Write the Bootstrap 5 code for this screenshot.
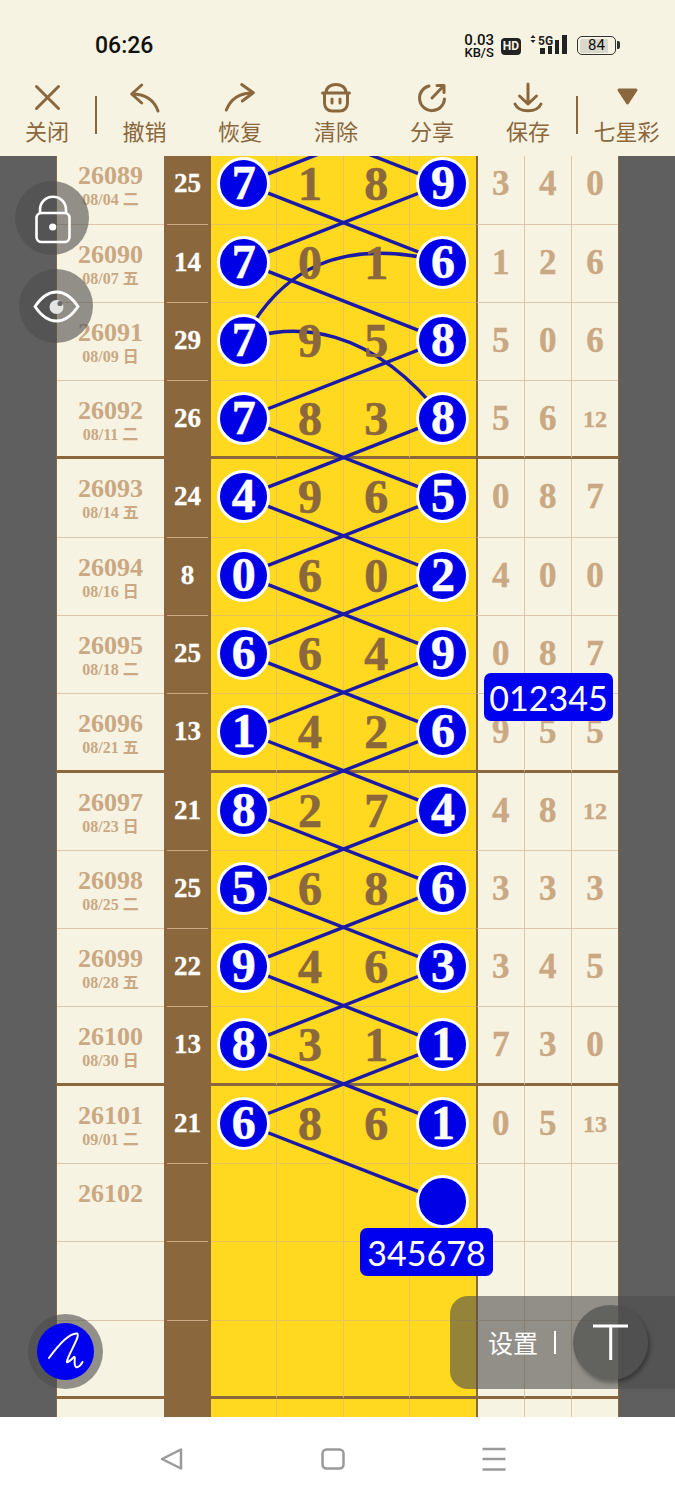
<!DOCTYPE html>
<html lang="zh-CN">
<head>
    <meta charset="UTF-8">
    <meta name="viewport" content="width=device-width, initial-scale=1.0">
    <title>七星彩</title>
    <link href="https://cdn.jsdelivr.net/npm/bootstrap@5.3.0/dist/css/bootstrap.min.css" rel="stylesheet">
    <style>
        body {
            width: 675px;
            height: 1500px;
            overflow: hidden;
            background-color: #fff;
            font-family: "Liberation Serif", "Noto Sans CJK SC", serif;
        }
        .status-bar {
            height: 76px;
            padding: 0 59px 0 95px;
            background-color: #f7f3e2;
            color: #111;
            font-family: Roboto, sans-serif;
        }
        .clock { font-size: 23px; font-weight: 500; margin-top: 31px; line-height: 30px; }
        .net-speed { font-size: 15px; line-height: 13px; font-weight: 500; text-align: center; margin-top: 34px; }
        .net-speed span { display: block; font-size: 13px; line-height: 11px; }
        .hd-badge {
            width: 20px;
            height: 17px;
            margin: 38px 0 0 7px;
            border-radius: 4px;
            background-color: #222;
            color: #f7f3e2;
            font-size: 12px;
            line-height: 17px;
            font-weight: 700;
            text-align: center;
        }
        .signal { margin: 33px 0 0 6px; }
        .signal text { font-family: Roboto, sans-serif; font-size: 12px; font-weight: 700; fill: #222; }
        .battery {
            width: 39px;
            height: 19px;
            margin: 36px 0 0 9px;
            border: 1.5px solid #333;
            border-radius: 5px;
            background: linear-gradient(90deg, #d8d8cc 0 80%, transparent 80%);
            background-clip: content-box;
            padding: 1.5px;
            font-size: 15px;
            line-height: 13px;
            text-align: center;
            position: relative;
        }
        .battery::after {
            content: "";
            position: absolute;
            right: -5px;
            top: 4px;
            width: 3px;
            height: 8px;
            border-radius: 0 2px 2px 0;
            background-color: #333;
        }
        .tool-bar {
            height: 80px;
            background-color: #f7f3e2;
            color: #8a673c;
            font-family: "Noto Sans CJK SC", sans-serif;
        }
        .tool-item { width: 96px; text-align: center; font-size: 22px; line-height: 32px; }
        .tool-item svg { display: block; margin: 6px auto 0; height: 32px; width: 40px; }
        .tool-item.first-item { width: 94px; }
        .tool-item.undo-item { width: 95px; }
        .tool-item.last-item { width: 97px; }
        .tool-sep { width: 2px; height: 38px; margin: 20px 0 0 0; background-color: #8a673c; }
        .tool-sep.first-sep { margin-left: 1px; }
        .tool-bar svg { fill: none; stroke: #8a673c; stroke-width: 3; stroke-linecap: round; stroke-linejoin: round; }

        .board { height: 1261px; background-color: #5f5f5f; overflow: hidden; position: relative; }
        .sheet {
            position: relative;
            width: 563px;
            margin: -9.8px 0 0 56px;
            border-left: 1px solid #8a673c;
            border-right: 1px solid #8a673c;
        }
        .draw-row { display: flex; height: 78.3px; }
        .cell { border-bottom: 1px solid #dcc7aa; background-color: #f7f3e2; color: #c9a883; font-weight: 700; }
        .is-end .cell { border-bottom: 3px solid #8a673c; }
        .date-cell { width: 107px; padding-top: 17px; text-align: center; }
        .issue-no { font-size: 26px; line-height: 26px; }
        .issue-date { font-size: 16px; line-height: 20px; padding-top: 1px; }
        .sum-cell {
            width: 47px;
            position: relative;
            background-color: #8a673c;
            color: #fff;
            font-size: 27px;
            line-height: 75px;
            text-align: center;
            border-bottom-width: 0 !important;
            -webkit-text-stroke: .3px #fff;
        }
        .sum-cell::after {
            content: "";
            position: absolute;
            left: 3px;
            right: 3px;
            bottom: 0;
            height: 1px;
            background-color: #c9a883;
        }
        .is-end .sum-cell::after { display: none; }
        .ball-cell, .num-cell {
            width: 66.25px;
            background-color: #ffd820;
            border-right: 1px solid #e8c25c;
            border-bottom-color: #e8c25c;
            color: #8a673c;
            font-size: 48px;
            line-height: 75px;
            text-align: center;
        }
        .ball-cell.col-last, .num-cell.col-last { border-right: 0; }
        .num-val { position: relative; z-index: 2; -webkit-text-stroke: .6px #8a673c; }
        .ball-wrap { padding-top: 11px; display: flex; justify-content: center; }
        .ball {
            position: relative;
            z-index: 2;
            width: 53px;
            height: 53px;
            border: 3px solid #fff;
            border-radius: 50%;
            background-color: #0000e6;
            color: #fff;
            font-size: 48px;
            line-height: 46px;
            -webkit-text-stroke: .5px #fff;
        }
        .miss-cell {
            width: 47.5px;
            border-right: 1px solid #dcc7aa;
            font-size: 35px;
            line-height: 76px;
            text-align: center;
            -webkit-text-stroke: .4px #c9a883;
        }
        .miss-cell.col-first { border-left: 2px solid #8a673c; width: 48.5px; }
        .miss-cell.col-end { border-right: 0; width: 46px; }
        .miss-cell.is-small { font-size: 24px; }
        .lines {
            position: absolute;
            left: 154px;
            top: 0;
            z-index: 1;
            width: 265px;
            height: 1340px;
            overflow: visible;
            pointer-events: none;
        }
        .lines line, .lines path { stroke: #1a1aa6; stroke-width: 3.4; fill: none; }

        .float-btn {
            position: absolute;
            z-index: 5;
            width: 74px;
            height: 74px;
            border-radius: 50%;
            background-color: rgba(76, 76, 76, .6);
        }
        .lock-btn { left: 15px; top: 25px; }
        .eye-btn { left: 19px; top: 113px; }
        .pen-btn { left: 28px; top: 1158px; width: 75px; height: 75px; padding: 9px; }
        .pen-dot { width: 57px; height: 57px; border-radius: 50%; background-color: #0000f0; }
        .code-tag {
            position: absolute;
            z-index: 6;
            height: 48px;
            border-radius: 7px;
            background-color: #0000f0;
            color: #fff;
            font-family: Lato, sans-serif;
            font-size: 34px;
            line-height: 50px;
            text-align: center;
        }
        .tag-top { left: 484px; top: 517px; width: 129px; }
        .tag-bottom { left: 360px; top: 1072px; width: 133px; }
        .set-panel {
            position: absolute;
            z-index: 5;
            left: 450px;
            top: 1140px;
            width: 225px;
            height: 93px;
            padding-left: 38px;
            border-radius: 18px 0 0 18px;
            background-color: rgba(76, 76, 76, .6);
            color: #fff;
            font-family: "Noto Sans CJK SC", sans-serif;
            font-size: 25px;
        }
        .set-sep { width: 2px; height: 23px; margin: 0 17px 0 16px; background-color: #fff; }
        .top-btn {
            width: 75px;
            height: 75px;
            margin-top: -1px;
            border-radius: 50%;
            background-color: rgba(78, 78, 78, .7);
            box-shadow: 2px 3px 4px rgba(0, 0, 0, .35);
        }
        .nav-row { height: 83px; padding: 29px 10px 0 0; background-color: #fff; }
        .nav-item-box { width: 161px; text-align: center; }
        .nav-item-box svg { fill: none; stroke: #9a9a9a; stroke-width: 2.5; stroke-linejoin: round; }
    </style>
</head>
<body>
<div class="status-bar d-flex align-items-start">
    <div class="clock">06:26</div>
    <div class="net-speed ms-auto">0.03<span>KB/S</span></div>
    <div class="hd-badge">HD</div>
    <svg class="signal" width="41" height="24" viewBox="0 0 41 24">
        <path d="M3.5 5 L6 2 L8.5 5Z M3.5 7 L6 10 L8.5 7Z" fill="#222"/>
        <text x="11" y="12">5G</text>
        <rect x="13" y="15" width="5" height="6" fill="#222"/>
        <rect x="21" y="13" width="4" height="8" fill="#222"/>
        <rect x="28" y="7" width="4" height="14" fill="#222"/>
        <rect x="35" y="2" width="5" height="19" fill="#222"/>
    </svg>
    <div class="battery">84</div>
</div>
<div class="tool-bar d-flex align-items-start">
    <div class="tool-item first-item">
        <svg viewBox="0 0 40 32"><path d="M9.5 4.5 L31.5 26.5 M31.5 4.5 L9.5 26.5"/></svg>关闭
    </div>
    <div class="tool-sep first-sep"></div>
    <div class="tool-item undo-item">
        <svg viewBox="0 0 40 32"><path d="M16.7 3 L6.7 12 L16.7 21 M6.7 12 C20 12 29 18 33 29"/></svg>撤销
    </div>
    <div class="tool-item">
        <svg viewBox="0 0 40 32"><path d="M21.7 2.5 L33.3 10.7 L22.3 19 M33 10.7 C20 11 11 16 6.3 28"/></svg>恢复
    </div>
    <div class="tool-item">
        <svg viewBox="0 0 40 32"><path d="M6.5 11 H33.5 M10 11 C10 -0.5 30 -0.5 30 11 M8.5 11 V21 C8.5 26 12 29 16 29 H24 C28 29 31.5 26 31.5 21 V11 M16 17 V21 M24 17 V21"/></svg>清除
    </div>
    <div class="tool-item">
        <svg viewBox="0 0 40 32"><path d="M17 4 A12.5 12.5 0 1 0 32.5 17 M20 16 L32 3.5 M25 3.5 H32 V10.5"/></svg>分享
    </div>
    <div class="tool-item">
        <svg viewBox="0 0 40 32"><path d="M20 2 V22 M11.5 14 L20 22 L28.5 14 M7 22 C11 31 29 31 33 22"/></svg>保存
    </div>
    <div class="tool-sep"></div>
    <div class="tool-item last-item">
        <svg viewBox="0 0 40 32"><path d="M12 8 H29 L20.5 21Z" fill="#8a673c"/></svg>七星彩
    </div>
</div>

<div class="board">
    <div class="sheet" id="sheet"></div>

    <div class="float-btn lock-btn">
        <svg width="74" height="74" viewBox="0 0 74 74" fill="none" stroke="#fff" stroke-width="2.6">
            <rect x="21.5" y="32" width="33" height="29" rx="5"/>
            <path d="M25 32 V28.7 A13 13 0 0 1 51 28.7 V32"/>
            <circle cx="37.7" cy="46" r="3.6" fill="#fff" stroke="none"/>
        </svg>
    </div>
    <div class="float-btn eye-btn">
        <svg width="74" height="74" viewBox="0 0 74 74" fill="none" stroke="#fff" stroke-width="2.8">
            <path d="M16 37.5 C23 27 30 23 37.5 23 C45 23 52 27 59 37.5 C52 48 45 52 37.5 52 C30 52 23 48 16 37.5Z"/>
            <circle cx="37.5" cy="38" r="7" fill="#e4e4e4" stroke="none"/>
            <circle cx="41" cy="34.5" r="2.6" fill="#6c6c6c" stroke="none"/>
        </svg>
    </div>
    <div class="float-btn pen-btn">
        <div class="pen-dot">
            <svg width="57" height="57" viewBox="0 0 57 57" fill="none" stroke="#fff" stroke-width="2" stroke-linecap="round" stroke-linejoin="round">
                <path d="M12 35 C20 24 32 10 40 10.5 C44 12 32 30 30 38 C29 41 33 38 37 34 C39 33 36 42 39 44 C41 45 44 42 45.5 39"/>
            </svg>
        </div>
    </div>

    <div class="code-tag tag-top">012345</div>
    <div class="code-tag tag-bottom">345678</div>

    <div class="set-panel d-flex align-items-center">
        <span>设置</span>
        <div class="set-sep"></div>
        <div class="top-btn">
            <svg width="75" height="75" viewBox="0 0 75 75" fill="none" stroke="#fff" stroke-width="3">
                <path d="M20 21 H55 M37.7 21 V55"/>
            </svg>
        </div>
    </div>
</div>

<div class="nav-row d-flex justify-content-center align-items-start">
    <div class="nav-item-box">
        <svg width="24" height="24" viewBox="0 0 24 24"><path d="M2 12 L21 2.5 V21.5Z"/></svg>
    </div>
    <div class="nav-item-box">
        <svg width="24" height="24" viewBox="0 0 24 24"><rect x="1.5" y="2.5" width="21" height="19" rx="4"/></svg>
    </div>
    <div class="nav-item-box">
        <svg width="24" height="24" viewBox="0 0 24 24"><path d="M0.5 2 H23.5 M0.5 12 H23.5 M0.5 22.5 H23.5"/></svg>
    </div>
</div>

<script src="https://cdn.jsdelivr.net/npm/bootstrap@5.3.0/dist/js/bootstrap.bundle.min.js"></script>
<script>
    const rows = [
        ['26089', '08/04 二', 25, [7, 1, 8, 9], [3, 4, 0]],
        ['26090', '08/07 五', 14, [7, 0, 1, 6], [1, 2, 6]],
        ['26091', '08/09 日', 29, [7, 9, 5, 8], [5, 0, 6]],
        ['26092', '08/11 二', 26, [7, 8, 3, 8], [5, 6, 12]],
        ['26093', '08/14 五', 24, [4, 9, 6, 5], [0, 8, 7]],
        ['26094', '08/16 日', 8, [0, 6, 0, 2], [4, 0, 0]],
        ['26095', '08/18 二', 25, [6, 6, 4, 9], [0, 8, 7]],
        ['26096', '08/21 五', 13, [1, 4, 2, 6], [9, 5, 5]],
        ['26097', '08/23 日', 21, [8, 2, 7, 4], [4, 8, 12]],
        ['26098', '08/25 二', 25, [5, 6, 8, 6], [3, 3, 3]],
        ['26099', '08/28 五', 22, [9, 4, 6, 3], [3, 4, 5]],
        ['26100', '08/30 日', 13, [8, 3, 1, 1], [7, 3, 0]],
        ['26101', '09/01 二', 21, [6, 8, 6, 1], [0, 5, 13]],
        ['26102', '', '', ['', '', '', ' '], ['', '', '']],
        ['', '', '', ['', '', '', ''], ['', '', '']],
        ['', '', '', ['', '', '', ''], ['', '', '']],
        ['', '', '', ['', '', '', ''], ['', '', '']],
    ];

    const rowH = 78.3;
    const leftX = 32.5;
    const rightX = 232.5;
    const ballY = (i) => 37.5 + rowH * i;

    let html = '';
    rows.forEach((r, i) => {
        const end = i % 4 === 3 ? ' is-end' : '';
        let balls = '';
        r[3].forEach((n, c) => {
            const isBall = (c === 0 || c === 3) && n !== '';
            const last = c === 3 ? ' col-last' : '';
            balls += isBall
                ? `<div class="cell ball-cell${last}"><div class="ball-wrap"><div class="ball">${n}</div></div></div>`
                : `<div class="cell num-cell${last}"><span class="num-val">${n}</span></div>`;
        });
        let miss = '';
        r[4].forEach((n, c) => {
            const pos = c === 0 ? ' col-first' : c === 2 ? ' col-end' : '';
            const small = n > 9 ? ' is-small' : '';
            miss += `<div class="cell miss-cell${pos}${small}">${n}</div>`;
        });
        html += `
            <div class="draw-row${end}">
                <div class="cell date-cell">
                    <div class="issue-no">${r[0]}</div>
                    <div class="issue-date">${r[1]}</div>
                </div>
                <div class="cell sum-cell">${r[2]}</div>
                ${balls}${miss}
            </div>`;
    });

    // connecting lines, row -1 is hidden under the toolbar
    let lines = '';
    for (let i = -1; i < 13; i++) {
        if (i !== 1 && i < 12) {
            lines += `<line x1="${rightX}" y1="${ballY(i)}" x2="${leftX}" y2="${ballY(i + 1)}"/>`;
        }
        if (i !== 2) {
            lines += `<line x1="${leftX}" y1="${ballY(i)}" x2="${rightX}" y2="${ballY(i + 1)}"/>`;
        }
    }
    lines += `<path d="M${leftX} ${ballY(2)} C69 124 129 90 ${rightX} ${ballY(1)}"/>`;
    lines += `<path d="M${leftX} ${ballY(2)} C84 176 159 179 ${rightX} ${ballY(3)}"/>`;

    document.getElementById('sheet').innerHTML =
        html + `<svg class="lines" viewBox="0 0 265 1340">${lines}</svg>`;
</script>
</body>
</html>
